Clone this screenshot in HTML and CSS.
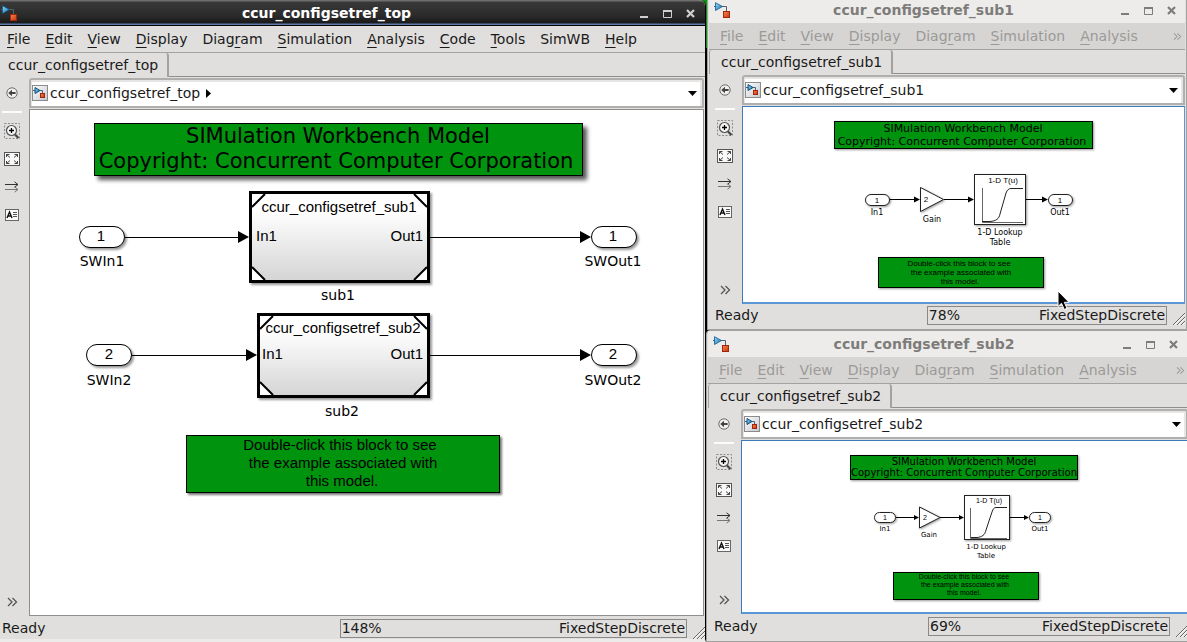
FILE: index.html
```html
<!DOCTYPE html>
<html lang="en">
<head>
<meta charset="utf-8">
<title>ccur_configsetref_top</title>
<link rel="stylesheet" href="styles.css">
</head>
<body>
<svg class="defs" aria-hidden="true">
  <defs>
    <linearGradient id="blue" x1="0" y1="0" x2="1" y2="1"><stop offset="0" stop-color="#9bd8f5"/><stop offset="1" stop-color="#0a6fb0"/></linearGradient>
    <linearGradient id="red" x1="0" y1="0" x2="1" y2="1"><stop offset="0" stop-color="#f58a55"/><stop offset="1" stop-color="#c8310c"/></linearGradient>
    <linearGradient id="tile" x1="0" y1="0" x2="1" y2="1"><stop offset="0" stop-color="#fff"/><stop offset="1" stop-color="#c4c8ce"/></linearGradient>
    <linearGradient id="block" x1="0" y1="0" x2="0" y2="1"><stop offset="0.2" stop-color="#fff"/><stop offset="1" stop-color="#d4d4d4"/></linearGradient>
    <symbol id="logo" viewBox="0 0 16 17">
      <path d="M0 4.5H3M8 4.5H12.5V10" fill="none" stroke="#4f6170"/>
      <path d="M1.5 .7L8.5 4.5L1.5 8.5Z" fill="url(#blue)" stroke="#0c5a8c" stroke-width=".8"/>
      <rect x="9.5" y="9.5" width="6" height="6" fill="url(#red)" stroke="#a3260a"/>
    </symbol>
    <symbol id="model" viewBox="0 0 16 16">
      <rect x=".5" y=".5" width="15" height="15" fill="url(#tile)" stroke="#8b8b8b"/>
      <path d="M1 5.5H3M8 5.5H10.5V8" fill="none" stroke="#4f6170"/>
      <path d="M3 2.5L8 5.5L3 8.5Z" fill="url(#blue)" stroke="#0c4f7c"/>
      <rect x="8.5" y="8.5" width="4" height="4" fill="url(#red)" stroke="#a3260a"/>
    </symbol>
    <symbol id="back" viewBox="0 0 12 12">
      <circle cx="6" cy="6" r="5.2" fill="#f1f1f0" stroke="#6b6b6b"/>
      <path d="M2.2 6L6 2.8V5.1H9.6V6.9H6V9.2Z" fill="#444"/>
    </symbol>
    <symbol id="zoom-area" viewBox="0 0 16 16">
      <rect x=".5" y=".5" width="15" height="15" fill="none" stroke="#8c8c8c" stroke-dasharray="2 1.5"/>
      <path d="M11 11.5L14.5 15" stroke="#444" stroke-width="2.2"/>
      <circle cx="7.5" cy="7.5" r="5" fill="#f7f7f7" stroke="#555" stroke-width="1.2"/>
      <path d="M5 7.5H10M7.5 5V10" stroke="#000" stroke-width="1.3"/>
    </symbol>
    <symbol id="fit" viewBox="0 0 16 14">
      <rect x=".5" y=".5" width="15" height="13" fill="#f8f8f8" stroke="#555"/>
      <path d="M2.5 5V2.5H5.5M2.5 2.5L6 5.5M10.5 2.5H13.5V5M13.5 2.5L10 5.5M2.5 9V11.5H5.5M2.5 11.5L6 8.5M10.5 11.5H13.5V9M13.5 11.5L10 8.5" fill="none" stroke="#444"/>
    </symbol>
    <symbol id="times" viewBox="0 0 14 12">
      <path d="M0 3.5H13M9.5 .8L13 3.5L9.5 6.2" fill="none" stroke="#333"/>
      <path d="M0 8.5H13M9.5 5.8L13 8.5L9.5 11.2" fill="none" stroke="#777"/>
    </symbol>
    <symbol id="annotate" viewBox="0 0 14 12">
      <rect x=".5" y=".5" width="13" height="11" fill="#fafafa" stroke="#666"/>
      <path d="M2 9L4.5 3L7 9M3 7H6" fill="none" stroke="#111" stroke-width="1.4"/>
      <path d="M8 3.5H12M8 5.5H12M8 7.5H12" stroke="#444" stroke-width=".9"/>
    </symbol>
    <symbol id="more" viewBox="0 0 11 9">
      <path d="M1 .5L5 4.5L1 8.5M5.5 .5L9.5 4.5L5.5 8.5" fill="none" stroke="currentColor" stroke-width="1.3"/>
    </symbol>
    <symbol id="min" viewBox="0 0 9 9"><path d="M0 8H8" stroke="currentColor" stroke-width="2"/></symbol>
    <symbol id="max" viewBox="0 0 9 9"><path d="M.5 1V8.5H8.5V1" fill="none" stroke="currentColor"/><path d="M0 2H9" stroke="currentColor" stroke-width="2"/></symbol>
    <symbol id="close" viewBox="0 0 9 9"><path d="M1 1L8 8M8 1L1 8" stroke="currentColor" stroke-width="2.2"/></symbol>
    <symbol id="drop" viewBox="0 0 9 5"><path d="M0 0H9L4.5 5Z" fill="#000"/></symbol>
    <symbol id="grip" viewBox="0 0 12 12">
      <path d="M0 12L12 0M4 12L12 4M8 12L12 8" stroke="#666"/>
      <path d="M1.3 12L12 1.3M5.3 12L12 5.3M9.3 12L12 9.3" stroke="#fff"/>
    </symbol>
  </defs>
</svg>

<main class="desktop">
  <section class="window top">
    <header class="titlebar">
      <svg class="logo"><use href="#logo"/></svg>
      <h1 class="title">ccur_configsetref_top</h1>
      <button class="winbtn" aria-label="Minimize"><svg><use href="#min"/></svg></button>
      <button class="winbtn" aria-label="Maximize"><svg><use href="#max"/></svg></button>
      <button class="winbtn" aria-label="Close"><svg><use href="#close"/></svg></button>
    </header>
    <nav class="menubar">
      <button><u>F</u>ile</button><button><u>E</u>dit</button><button><u>V</u>iew</button><button><u>D</u>isplay</button><button>Diag<u>r</u>am</button><button><u>S</u>imulation</button><button><u>A</u>nalysis</button><button><u>C</u>ode</button><button><u>T</u>ools</button><button>SimWB</button><button><u>H</u>elp</button>
    </nav>
    <div class="tabs"><button class="tab">ccur_configsetref_top</button></div>
    <div class="workspace">
      <aside class="tools">
        <button class="back" aria-label="Back"><svg class="i12"><use href="#back"/></svg></button>
        <button class="tool" aria-label="Zoom"><svg class="i16"><use href="#zoom-area"/></svg></button>
        <button class="tool" aria-label="Fit to view"><svg class="i16"><use href="#fit"/></svg></button>
        <button class="tool" aria-label="Sample time"><svg class="i14"><use href="#times"/></svg></button>
        <button class="tool" aria-label="Annotation"><svg class="i14"><use href="#annotate"/></svg></button>
        <button class="tool last" aria-label="More"><svg class="i11"><use href="#more"/></svg></button>
      </aside>
      <div class="address">
        <svg class="i16"><use href="#model"/></svg>
        <button class="crumb">ccur_configsetref_top</button>
        <svg class="next" viewBox="0 0 5 9"><path d="M0 0L5 4.5L0 9Z"/></svg>
        <button class="drop" aria-label="History"><svg><use href="#drop"/></svg></button>
      </div>
      <div class="canvas">
        <svg class="diagram">
          <g class="box deep"><rect x="64.5" y="13.5" width="488" height="52"/></g>
          <text class="t21" x="308" y="33">SIMulation Workbench Model</text>
          <text class="t21" x="306" y="58">Copyright: Concurrent Computer Corporation</text>

          <g class="ref">
            <rect x="220.5" y="82.5" width="178" height="89"/>
            <path class="corner" d="M222 97V84H235ZM384 84H397V97ZM222 157V170H235ZM397 157V170H384Z"/>
            <path class="fold" d="M222 97L235 84M384 84L397 97M222 157L235 170M397 157L384 170"/>
          </g>
          <text class="a15" x="309" y="102">ccur_configsetref_sub1</text>
          <text class="a15 start" x="226" y="131">In1</text>
          <text class="a15 end" x="393" y="131">Out1</text>
          <text class="t14" x="308" y="190">sub1</text>
          <g class="port"><rect x="49.5" y="116.5" width="45" height="21" rx="10.5"/><rect x="561.5" y="116.5" width="45" height="21" rx="10.5"/></g>
          <path class="wire" d="M95 127.5H210M400 127.5H552"/>
          <path class="head" d="M208 121V133L219 127ZM550 121V133L561 127Z"/>
          <text class="a15" x="71" y="131">1</text>
          <text class="a15" x="583" y="131">1</text>
          <text class="t14" x="72" y="156">SWIn1</text>
          <text class="t14" x="583" y="156">SWOut1</text>

          <g class="ref">
            <rect x="228.5" y="204.5" width="170" height="82"/>
            <path class="corner" d="M230 219V206H243ZM384 206H397V219ZM230 272V285H243ZM397 272V285H384Z"/>
            <path class="fold" d="M230 219L243 206M384 206L397 219M230 272L243 285M397 272L384 285"/>
          </g>
          <text class="a15" x="313" y="223">ccur_configsetref_sub2</text>
          <text class="a15 start" x="232" y="249">In1</text>
          <text class="a15 end" x="393" y="249">Out1</text>
          <text class="t14" x="312" y="306">sub2</text>
          <g class="port"><rect x="56.5" y="234.5" width="45" height="21" rx="10.5"/><rect x="561.5" y="234.5" width="45" height="21" rx="10.5"/></g>
          <path class="wire" d="M102 245.5H218M400 245.5H552"/>
          <path class="head" d="M216 239V251L227 245ZM550 239V251L561 245Z"/>
          <text class="a15" x="79" y="249">2</text>
          <text class="a15" x="583" y="249">2</text>
          <text class="t14" x="79" y="275">SWIn2</text>
          <text class="t14" x="583" y="275">SWOut2</text>

          <g class="box"><rect x="156.5" y="325.5" width="313" height="57"/></g>
          <text class="a15" x="310" y="340">Double-click this block to see</text>
          <text class="a15" x="313" y="358">the example associated with</text>
          <text class="a15" x="312" y="376">this model.</text>
        </svg>
      </div>
    </div>
    <footer class="status"><span>Ready</span><div class="info"><span>148%</span><span>FixedStepDiscrete</span></div><svg class="grip"><use href="#grip"/></svg></footer>
  </section>

  <div class="side">
    <section class="window sub first">
      <header class="titlebar">
        <svg class="logo"><use href="#logo"/></svg>
        <h2 class="title">ccur_configsetref_sub1</h2>
        <button class="winbtn" aria-label="Minimize"><svg><use href="#min"/></svg></button>
        <button class="winbtn" aria-label="Maximize"><svg><use href="#max"/></svg></button>
        <button class="winbtn" aria-label="Close"><svg><use href="#close"/></svg></button>
      </header>
      <nav class="menubar">
        <button><u>F</u>ile</button><button><u>E</u>dit</button><button><u>V</u>iew</button><button><u>D</u>isplay</button><button>Diag<u>r</u>am</button><button><u>S</u>imulation</button><button><u>A</u>nalysis</button><button class="extra" aria-label="More menus"><svg><use href="#more"/></svg></button>
      </nav>
      <div class="tabs"><button class="tab">ccur_configsetref_sub1</button></div>
      <div class="workspace">
        <aside class="tools">
          <button class="back" aria-label="Back"><svg class="i12"><use href="#back"/></svg></button>
          <button class="tool" aria-label="Zoom"><svg class="i16"><use href="#zoom-area"/></svg></button>
          <button class="tool" aria-label="Fit to view"><svg class="i16"><use href="#fit"/></svg></button>
          <button class="tool" aria-label="Sample time"><svg class="i14"><use href="#times"/></svg></button>
          <button class="tool" aria-label="Annotation"><svg class="i14"><use href="#annotate"/></svg></button>
          <button class="tool last" aria-label="More"><svg class="i11"><use href="#more"/></svg></button>
        </aside>
        <div class="address">
          <svg class="i16"><use href="#model"/></svg>
          <button class="crumb">ccur_configsetref_sub1</button>
          <button class="drop" aria-label="History"><svg><use href="#drop"/></svg></button>
        </div>
        <div class="canvas">
          <svg class="diagram small">
            <g class="box"><rect x="91.5" y="14.5" width="258" height="27"/></g>
            <text class="t11" x="220" y="25">SIMulation Workbench Model</text>
            <text class="t11" x="219" y="38">Copyright: Concurrent Computer Corporation</text>
            <g class="port"><rect x="122.5" y="87.5" width="24" height="11" rx="5.5"/><rect x="305.5" y="87.5" width="24" height="11" rx="5.5"/><path d="M177.5 80.5V104.5L200.5 92.5Z"/><rect x="231.5" y="67.5" width="51" height="50"/></g>
            <path class="wire" d="M147 92.5H172M201 92.5H226M283 92.5H300"/>
            <path class="head" d="M171 89.5V95.5L177 92.5ZM225 89.5V95.5L231 92.5ZM299 89.5V95.5L305 92.5Z"/>
            <path class="axis" d="M239.5 81V115.5H280"/>
            <path class="curve" d="M239 114.5H247C253 114 256 112 257 107L263 86C264 83 266 81.5 268 81.5H280"/>
            <text class="a8" x="134" y="96">1</text>
            <text class="a8" x="183" y="95">2</text>
            <text class="a8" x="260" y="76">1-D T(u)</text>
            <text class="a8" x="317" y="96">1</text>
            <text class="t8" x="134" y="108">In1</text>
            <text class="t8" x="189" y="115">Gain</text>
            <text class="t8" x="257" y="128">1-D Lookup</text>
            <text class="t8" x="257" y="138">Table</text>
            <text class="t8" x="317" y="108">Out1</text>
            <g class="box"><rect x="135.5" y="150.5" width="165" height="30"/></g>
            <text class="a8" x="216" y="159">Double-click this block to see</text>
            <text class="a8" x="218" y="168">the example associated with</text>
            <text class="a8" x="217" y="177">this model.</text>
          </svg>
        </div>
      </div>
      <footer class="status"><span>Ready</span><div class="info"><span>78%</span><span>FixedStepDiscrete</span></div><svg class="grip"><use href="#grip"/></svg></footer>
      <svg class="cursor" viewBox="0 0 13 21"><path d="M1 1V16.5L4.5 13.3L7.3 19.5L10 18.3L7.3 12.3H12Z"/></svg>
    </section>

    <section class="window sub second">
      <header class="titlebar">
        <svg class="logo"><use href="#logo"/></svg>
        <h2 class="title">ccur_configsetref_sub2</h2>
        <button class="winbtn" aria-label="Minimize"><svg><use href="#min"/></svg></button>
        <button class="winbtn" aria-label="Maximize"><svg><use href="#max"/></svg></button>
        <button class="winbtn" aria-label="Close"><svg><use href="#close"/></svg></button>
      </header>
      <nav class="menubar">
        <button><u>F</u>ile</button><button><u>E</u>dit</button><button><u>V</u>iew</button><button><u>D</u>isplay</button><button>Diag<u>r</u>am</button><button><u>S</u>imulation</button><button><u>A</u>nalysis</button><button class="extra" aria-label="More menus"><svg><use href="#more"/></svg></button>
      </nav>
      <div class="tabs"><button class="tab">ccur_configsetref_sub2</button></div>
      <div class="workspace">
        <aside class="tools">
          <button class="back" aria-label="Back"><svg class="i12"><use href="#back"/></svg></button>
          <button class="tool" aria-label="Zoom"><svg class="i16"><use href="#zoom-area"/></svg></button>
          <button class="tool" aria-label="Fit to view"><svg class="i16"><use href="#fit"/></svg></button>
          <button class="tool" aria-label="Sample time"><svg class="i14"><use href="#times"/></svg></button>
          <button class="tool" aria-label="Annotation"><svg class="i14"><use href="#annotate"/></svg></button>
          <button class="tool last" aria-label="More"><svg class="i11"><use href="#more"/></svg></button>
        </aside>
        <div class="address">
          <svg class="i16"><use href="#model"/></svg>
          <button class="crumb">ccur_configsetref_sub2</button>
          <button class="drop" aria-label="History"><svg><use href="#drop"/></svg></button>
        </div>
        <div class="canvas">
          <svg class="diagram small">
            <g class="box"><rect x="108.5" y="14.5" width="227" height="24"/></g>
            <text class="t10" x="222" y="24">SIMulation Workbench Model</text>
            <text class="t10" x="222" y="35">Copyright: Concurrent Computer Corporation</text>
            <g class="port"><rect x="132.5" y="71.5" width="21" height="10" rx="5"/><rect x="287.5" y="71.5" width="21" height="10" rx="5"/><path d="M177.5 66V87L198 76.5Z"/><rect x="222.5" y="54.5" width="45" height="44"/></g>
            <path class="wire" d="M154 76.5H173M198 76.5H218M268 76.5H283"/>
            <path class="head" d="M172 74V79L177 76.5ZM217 74V79L222 76.5ZM282 74V79L287 76.5Z"/>
            <path class="axis" d="M228.5 67V97.5H265"/>
            <path class="curve" d="M229 96.5H235C240 96 243 94 244 89L250 71C251 68 252 66.5 254 66.5H265"/>
            <text class="a7" x="143" y="79">1</text>
            <text class="a7" x="183" y="79">2</text>
            <text class="a7" x="247" y="62">1-D T(u)</text>
            <text class="a7" x="298" y="79">1</text>
            <text class="t7" x="143" y="90">In1</text>
            <text class="t7" x="187" y="96">Gain</text>
            <text class="t7" x="244" y="108">1-D Lookup</text>
            <text class="t7" x="244" y="117">Table</text>
            <text class="t7" x="298" y="90">Out1</text>
            <g class="box"><rect x="151.5" y="131.5" width="145" height="27"/></g>
            <text class="a7" x="222" y="138">Double-click this block to see</text>
            <text class="a7" x="223" y="146">the example associated with</text>
            <text class="a7" x="222" y="154">this model.</text>
          </svg>
        </div>
      </div>
      <footer class="status"><span>Ready</span><div class="info"><span>69%</span><span>FixedStepDiscrete</span></div><svg class="grip"><use href="#grip"/></svg></footer>
    </section>
  </div>
</main>
</body>
</html>
```
FILE: styles.css
```css
* { box-sizing: border-box; }
body {
  margin: 0;
  font: 14px/18px "DejaVu Sans", sans-serif;
  color: #1a1a1a;
  background: #000;
}
button {
  margin: 0;
  padding: 0;
  border: 0;
  background: none;
  font: inherit;
  color: inherit;
}
svg { display: block; flex: none; }
.defs { position: absolute; width: 0; height: 0; }

.desktop {
  display: grid;
  grid-template-columns: 706fr 481fr;
  height: 100vh;
  overflow: hidden;
  background: linear-gradient(#009a0a 48px, #000 48px);
}
.side {
  display: grid;
  grid-template-rows: 330fr 312fr;
  min-width: 0;
  min-height: 0;
}
.window {
  --edge: 0px;
  --line: #a3a2a0;
  display: flex;
  flex-direction: column;
  min-width: 0;
  min-height: 0;
  background: #e0dfdd;
}
.top {
  border-right: 1px solid #000;
  border-bottom: 3px solid #ecebe9;
  border-top-right-radius: 6px;
}
.sub {
  --edge: 4px;
  border: solid #a3a2a0;
  border-width: 0 1px 1px;
  padding: 0 0 2px 1px;
}
.first { position: relative; margin-left: 1px; padding-right: 1px; }
.second {
  margin-right: -2px;
  border-top-width: 1px;
  border-top-left-radius: 4px;
  padding-bottom: 4px;
}

/* Title bar */
.titlebar {
  display: flex;
  align-items: center;
  flex: none;
  height: 26px;
  padding: 0 3px 0 calc(var(--edge) + 1px);
  background: #edecea;
  color: #7d7c7a;
}
.top .titlebar {
  background: linear-gradient(#6e6e6e 1px, #383838 2px, #2b2b2b 60%, #1a1a1a 23px, #5c7ca8 24px, #5c7ca8 25px, #000 25px);
  color: #fff;
  border-top-right-radius: 6px;
}
.first .titlebar { height: 23px; padding-right: 2px; padding-bottom: 3px; }
.logo { width: 16px; height: 17px; }
.title {
  flex: 1;
  margin: 0;
  padding-left: 3px;
  text-align: center;
  font-size: 14px;
  line-height: 18px;
  font-weight: bold;
}
.winbtn {
  display: flex;
  justify-content: center;
  width: 23px;
}
.top .winbtn { color: #d0d0d0; }
.winbtn svg { width: 9px; height: 9px; }

/* Menu bar */
.menubar {
  display: flex;
  align-items: center;
  flex: none;
  gap: 15px;
  height: 27px;
  padding: 0 3px 0 calc(var(--edge) + 7px);
  border-bottom: 1px solid var(--line);
}
.menubar u { text-underline-offset: 3px; text-decoration-thickness: 1px; }
.sub .menubar {
  background: #d6d5d3;
  color: #9b9a98;
  text-shadow: 1px 1px #f4f4f3;
}
.extra { margin-left: auto; }
.extra svg { width: 9px; height: 7px; }

/* Tabs */
.tabs { display: flex; flex: none; height: 25px; padding-bottom: 1px; }
.tabs::after {
  content: "";
  flex: 1;
  border-bottom: 1px solid #8f8e8c;
}
.tab {
  padding: 0 9px 0 8px;
  border-right: 2px solid #a3a2a0;
  border-top-right-radius: 3px;
  text-align: left;
}
.sub .tab { padding-left: 11px; border-left: 1px solid #a3a2a0; border-top-left-radius: 3px; }

/* Tool palette, address bar and canvas */
.workspace {
  display: grid;
  grid-template-columns: calc(var(--edge) + 29px) 1fr;
  grid-template-rows: 31px 1fr;
  flex: 1;
  min-height: 0;
}
.top .workspace { padding-right: 1px; }
.tools {
  grid-row: 1 / 3;
  display: flex;
  flex-direction: column;
  align-items: center;
  padding: 0 5px 0 var(--edge);
}
.back, .tool {
  display: flex;
  align-items: center;
  justify-content: center;
  width: 20px;
  height: 28px;
}
.back { height: 30px; }
.back + .tool { margin-top: 3px; border-top: 2px solid #fbfbfb; height: 34px; padding-top: 4px; }
.last { margin-top: auto; color: #555; }
.i16 { width: 16px; height: 16px; }
.i14 { width: 14px; height: 12px; }
.i12 { width: 12px; height: 12px; }
.i11 { width: 11px; height: 10px; }
.address {
  display: flex;
  align-items: center;
  margin-bottom: 1px;
  padding: 0 5px 0 1px;
  border: 2px solid #b0afad;
  border-radius: 3px 3px 0 0;
  background: #fff;
  box-shadow: inset 0 2px #e6e5e3, inset -2px 0 #e6e5e3, inset 1px 0 #e6e5e3;
}
.crumb { margin-left: 2px; }
.next { width: 5px; height: 9px; margin-left: 6px; }
.drop { margin-left: auto; }
.drop svg { width: 9px; height: 5px; }
.canvas {
  min-width: 0;
  min-height: 0;
  border: 1px solid #8f8e8c;
  background: #fff;
}
.sub .canvas { border-color: #3f7ab8 #5b97d6 #5b97d6 #3f7ab8; border-bottom-width: 2px; }

/* Block diagrams */
.diagram { width: 100%; height: 100%; overflow: hidden; fill: #000; }
.diagram text { text-anchor: middle; }
.diagram .start { text-anchor: start; }
.diagram .end { text-anchor: end; }
.box { fill: #00930d; stroke: #000; filter: drop-shadow(2px 2px 1px #0008); }
.deep { filter: drop-shadow(4px 4px 2px #000a); }
.ref { stroke: #000; filter: drop-shadow(2px 2px 1px #0006); }
.ref rect { fill: url(#block); stroke-width: 3px; }
.ref .corner { fill: #fff; stroke: none; }
.ref .fold { stroke-width: 2px; }
.port { fill: #fff; stroke: #000; filter: drop-shadow(2px 2px 1px #0006); }
.small .port, .small .box { filter: drop-shadow(1px 1px 1px #0006); }
.small .port { stroke: #222; }
.wire { fill: none; stroke: #000; }
.axis { fill: none; stroke: #666; }
.curve { fill: none; stroke: #222; }
.t21 { font-size: 21px; }
.t14 { font-size: 14px; }
.t11 { font-size: 11px; }
.t10 { font-size: 10px; }
.t8 { font-size: 8px; }
.t7 { font-size: 7px; }
.a15, .a8, .a7 { font-family: "Liberation Sans", Arial, sans-serif; }
.a15 { font-size: 15px; }
.a8 { font-size: 8px; }
.a7 { font-size: 7px; }

/* Status bar */
.status {
  display: flex;
  align-items: center;
  justify-content: space-between;
  flex: none;
  height: 23px;
  padding-left: calc(var(--edge) + 2px);
}
.first .status { padding-bottom: 2px; }
.info {
  display: flex;
  align-items: center;
  justify-content: space-between;
  width: calc(46% + 24px);
  height: 19px;
  margin: 1px 6px 0 auto;
  padding: 0 1px;
  border: 1px solid #8a8987;
}
.grip { align-self: flex-end; width: 12px; height: 12px; }

.cursor {
  position: absolute;
  left: 73%;
  bottom: 18px;
  width: 13px;
  height: 21px;
  fill: #000;
  stroke: #fff;
}
```
